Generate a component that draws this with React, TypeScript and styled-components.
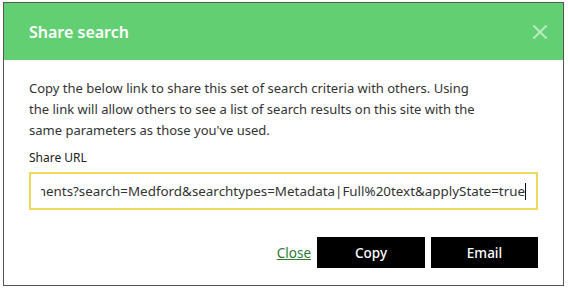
import { createGlobalStyle, styled } from 'styled-components';

const shareUrl =
  'https://archive.example.org/search/documents?search=Medford&searchtypes=Metadata|Full%20text&applyState=true';

const GlobalStyle = createGlobalStyle`
  html, body {
    margin: 0;
    padding: 0;
    background: #ffffff;
  }
  body {
    font-family: "Noto Sans", "DejaVu Sans", sans-serif;
  }
`;

const CloseIcon = () => (
  <svg width="14" height="14" viewBox="0 0 14 14" aria-hidden="true">
    <path d="M1 1 L13 13 M13 1 L1 13" stroke="currentColor" strokeWidth="2" strokeLinecap="square" />
  </svg>
);

const App = () => (
  <>
    <GlobalStyle />
    <Page>
      <Dialog>
        <Header>
          <Title>Share search</Title>
          <DismissButton aria-label="Close">
            <CloseIcon />
          </DismissButton>
        </Header>
        <Body>
          <Intro>
            Copy the below link to share this set of search criteria with others. Using the link will allow others
            to see a list of search results on this site with the same parameters as those you've used.
          </Intro>
          <Label>Share URL</Label>
          <UrlField>
            <UrlScroller>
              <UrlText>{shareUrl}</UrlText>
              <Caret />
            </UrlScroller>
          </UrlField>
        </Body>
        <Footer>
          <CloseLink href="#">Close</CloseLink>
          <ActionButton $width={108}>Copy</ActionButton>
          <ActionButton $width={107}>Email</ActionButton>
        </Footer>
      </Dialog>
    </Page>
  </>
);

export default App;

const Page = styled.div`
  width: 568px;
  height: 291px;
  padding: 2px 0 0 3px;
  box-sizing: border-box;
`;

const Dialog = styled.section`
  display: flex;
  flex-direction: column;
  width: 561px;
  height: 284px;
  box-sizing: border-box;
  border: 1.5px solid #555555;
  background: #ffffff;
`;

const Header = styled.header`
  display: flex;
  align-items: center;
  justify-content: space-between;
  height: 57px;
  padding: 0 16px 0 25px;
  background: #62cf73;
`;

const Title = styled.h2`
  margin: 0;
  font-size: 16px;
  font-weight: 600;
  color: #ffffff;
`;

const DismissButton = styled.button`
  display: flex;
  padding: 0;
  border: 0;
  background: none;
  color: #b7ebbf;
  cursor: pointer;
`;

const Body = styled.div`
  display: flex;
  flex-direction: column;
  padding: 18px 25px 0 25px;
`;

const Intro = styled.p`
  max-width: 460px;
  margin: 0;
  font-size: 13px;
  line-height: 21px;
  color: #333333;
`;

const Label = styled.label`
  margin-top: 9px;
  font-size: 12px;
  line-height: 16px;
  color: #222222;
`;

const UrlField = styled.div`
  display: flex;
  align-items: center;
  height: 38px;
  margin-top: 6px;
  padding: 0 10px;
  box-sizing: border-box;
  border: 2px solid #f0d75e;
`;

const UrlScroller = styled.div`
  display: flex;
  align-items: center;
  justify-content: flex-end;
  flex: 1;
  overflow: hidden;
  white-space: nowrap;
`;

const UrlText = styled.span`
  flex-shrink: 0;
  font-size: 13.4px;
  color: #333333;
`;

const Caret = styled.span`
  flex-shrink: 0;
  width: 1px;
  height: 17px;
  background: #111111;
`;

const Footer = styled.footer`
  display: flex;
  align-items: center;
  justify-content: flex-end;
  gap: 6px;
  margin-top: auto;
  padding: 0 25px 17px 0;
`;

const CloseLink = styled.a`
  font-size: 13.5px;
  color: #2c7a36;
  text-decoration: underline;
`;

const ActionButton = styled.button<{ $width: number }>`
  width: ${({ $width }) => $width}px;
  height: 31px;
  border: 0;
  background: #000000;
  font-family: inherit;
  font-size: 13.5px;
  font-weight: 500;
  color: #ffffff;
  cursor: pointer;
`;
